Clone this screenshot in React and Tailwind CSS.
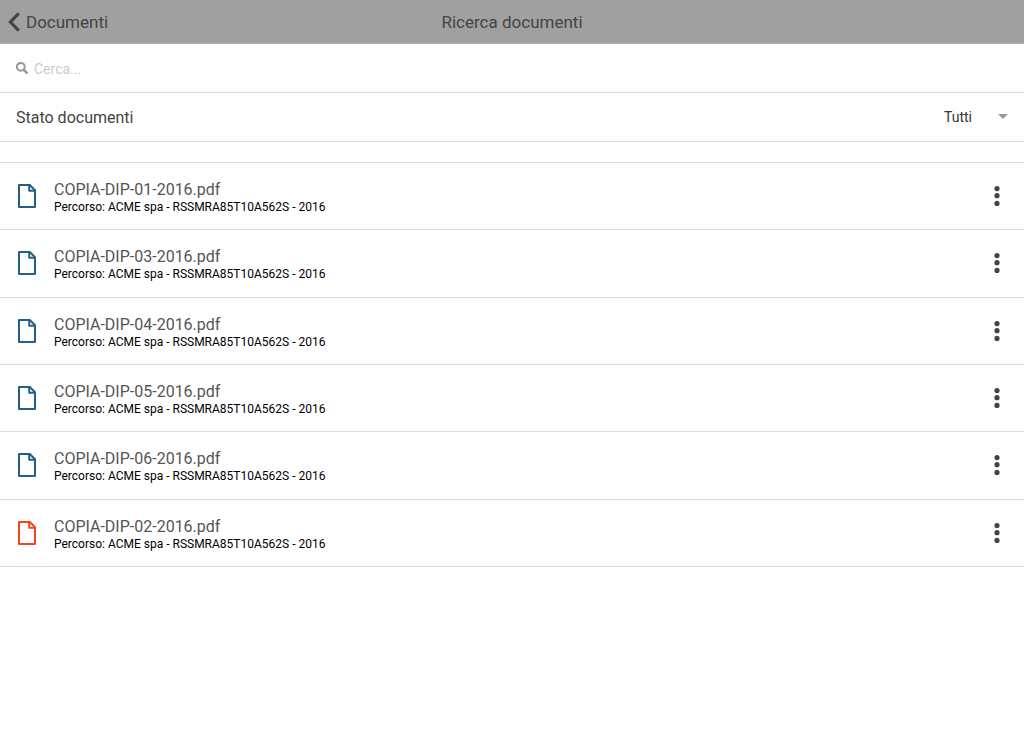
import { useState } from "react";

const documents = [
  { name: "COPIA-DIP-01-2016.pdf", unread: false },
  { name: "COPIA-DIP-03-2016.pdf", unread: false },
  { name: "COPIA-DIP-04-2016.pdf", unread: false },
  { name: "COPIA-DIP-05-2016.pdf", unread: false },
  { name: "COPIA-DIP-06-2016.pdf", unread: false },
  { name: "COPIA-DIP-02-2016.pdf", unread: true },
];

function BackIcon() {
  return (
    <svg className="h-5 w-3 shrink-0" viewBox="0 0 12 20" fill="none" stroke="currentColor" strokeWidth="3.2" aria-hidden="true">
      <path d="M10.8 1.4 2.4 10l8.4 8.6" />
    </svg>
  );
}

function SearchIcon() {
  return (
    <svg className="size-3 shrink-0 text-[#999]" viewBox="0 0 12 12" fill="none" stroke="currentColor" aria-hidden="true">
      <circle cx="4.8" cy="4.8" r="3.9" strokeWidth="2" />
      <path d="m8 8 2.8 2.8" strokeWidth="2.5" strokeLinecap="round" />
    </svg>
  );
}

function FileIcon({ unread }) {
  return (
    <svg
      className={unread ? "h-6 w-[18px] shrink-0 text-[#ee4823]" : "h-6 w-[18px] shrink-0 text-[#235f88]"}
      viewBox="0 0 18 24"
      fill="none"
      stroke="currentColor"
      strokeWidth="2"
      strokeLinejoin="round"
      aria-hidden="true"
    >
      <path d="M1 1h10.8L17 6.2V23H1z" />
      <path d="M11.2 1.2v5.6h5.6" />
    </svg>
  );
}

function DotsIcon() {
  return (
    <svg className="h-5 w-1.5" viewBox="0 0 6 20" fill="currentColor" aria-hidden="true">
      <circle cx="3" cy="2.6" r="2.6" />
      <circle cx="3" cy="9.7" r="2.6" />
      <circle cx="3" cy="17.4" r="2.6" />
    </svg>
  );
}

export default function App() {
  const [query, setQuery] = useState("");
  const [status, setStatus] = useState("tutti");

  return (
    <div className="min-h-screen bg-white font-[Roboto,sans-serif] text-[#444]">
      <header className="grid h-11 grid-cols-[1fr_auto_1fr] items-center border-b border-[#b2b2b2] bg-[#a0a0a0] px-2">
        <a href="#documenti" className="flex items-center gap-1.5 justify-self-start text-[17px] leading-6">
          <BackIcon />
          Documenti
        </a>
        <h1 className="text-[17px] leading-6">Ricerca documenti</h1>
      </header>

      <main>
        <div className="flex h-[49px] items-center gap-1.5 border-b border-[#ddd] px-4">
          <label htmlFor="search" aria-label="Cerca">
            <SearchIcon />
          </label>
          <input
            id="search"
            type="text"
            placeholder="Cerca..."
            value={query}
            onChange={(e) => setQuery(e.target.value)}
            className="h-full min-w-0 flex-1 pt-0.5 text-sm outline-none placeholder:text-[#ccc]"
          />
        </div>

        <div className="flex h-[49px] items-center justify-between border-b border-[#ddd] px-4">
          <label htmlFor="status" className="pt-0.5 text-base">
            Stato documenti
          </label>
          <div className="relative flex items-center">
            <select
              id="status"
              value={status}
              onChange={(e) => setStatus(e.target.value)}
              className="h-8 w-16 appearance-none text-sm text-[#333] outline-none"
            >
              <option value="tutti">Tutti</option>
            </select>
            <svg className="pointer-events-none absolute right-0 h-1.5 w-2.5 text-[#999]" viewBox="0 0 10 6" fill="currentColor" aria-hidden="true">
              <path d="M0 0h10L5 5z" />
            </svg>
          </div>
        </div>

        <ul className="mt-5 grid min-h-[405px] auto-rows-fr border-t border-[#ddd]">
          {documents.map((doc) => (
            <li key={doc.name} className="flex items-center border-b border-[#ddd] pl-[18px] pr-6">
              <FileIcon unread={doc.unread} />
              <div className="min-w-0 flex-1 pl-[18px] pt-1">
                <p className="truncate text-base leading-[18px] text-[#555]">{doc.name}</p>
                <p className="truncate text-xs leading-4 text-black">Percorso: ACME spa - RSSMRA85T10A562S - 2016</p>
              </div>
              <button type="button" aria-label={"Azioni per " + doc.name} className="text-[#444]">
                <DotsIcon />
              </button>
            </li>
          ))}
        </ul>
      </main>
    </div>
  );
}
